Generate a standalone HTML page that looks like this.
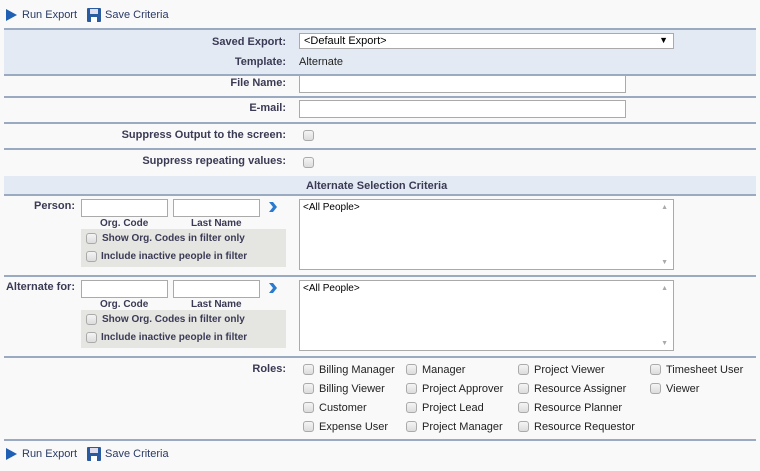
<!DOCTYPE html>
<html><head><style>
body{margin:0;width:760px;height:471px;background:#f9f9f9;font-family:"Liberation Sans",sans-serif;font-size:11px;color:#222;position:relative;overflow:hidden}
.a{position:absolute}
.ln{position:absolute;left:4px;width:752px;height:2px;background:#9aaac0}
.lb{position:absolute;font-weight:bold;color:#3a3a55;text-align:right;white-space:nowrap;margin-top:1px}
.in{position:absolute;background:#fff;border:1px solid #aaa;box-sizing:border-box}
.cb{position:absolute;width:11px;height:11px;border:1px solid #aaa;border-radius:3px;background:linear-gradient(#f4f4f4,#dcdcdc);box-sizing:border-box}
.t{position:absolute;white-space:nowrap;margin-top:1px}
.sm{font-weight:bold;color:#3a3a55;font-size:10px}
</style></head><body>
<svg class="a" style="left:5px;top:8px" width="13" height="14"><path d="M1 1L12 7L1 13Z" fill="#1f5fb4"/></svg>
<div class="t" style="left:22px;top:8px;color:#2a3a66">Run Export</div>
<svg class="a" style="left:87px;top:8px" width="14" height="14"><rect x="0" y="0" width="14" height="14" rx="1" fill="#2a5aa0"/><rect x="3" y="1" width="8" height="5" fill="#dde"/><rect x="4" y="9" width="6" height="5" fill="#fff"/></svg>
<div class="t" style="left:105px;top:8px;color:#2a3a66">Save Criteria</div>

<div class="ln" style="top:28px"></div>
<div class="a" style="left:4px;top:30px;width:752px;height:44px;background:#e4eaf3"></div>
<div class="lb" style="right:474px;top:35px">Saved Export:</div>
<div class="in" style="left:299px;top:33px;width:375px;height:16px;font-size:11px;padding:1px 4px;color:#000">&lt;Default Export&gt;<span style="position:absolute;right:5px;top:1px;font-size:9px">▼</span></div>
<div class="lb" style="right:474px;top:55px">Template:</div>
<div class="t" style="left:299px;top:55px">Alternate</div>
<div class="ln" style="top:74px"></div>
<div class="lb" style="right:474px;top:76px">File Name:</div>
<div class="in" style="left:299px;top:75px;width:327px;height:18px"></div>
<div class="ln" style="top:96px"></div>
<div class="lb" style="right:474px;top:101px">E-mail:</div>
<div class="in" style="left:299px;top:100px;width:327px;height:18px"></div>
<div class="ln" style="top:122px"></div>
<div class="lb" style="right:474px;top:128px">Suppress Output to the screen:</div>
<div class="cb" style="left:303px;top:130px"></div>
<div class="ln" style="top:148px"></div>
<div class="lb" style="right:474px;top:154px">Suppress repeating values:</div>
<div class="cb" style="left:303px;top:157px"></div>
<div class="a" style="left:4px;top:176px;width:752px;height:18px;background:#e4eaf3"></div>
<div class="lb" style="left:306px;top:179px">Alternate Selection Criteria</div>
<div class="ln" style="top:194px"></div>

<div class="lb" style="right:685px;top:199px">Person:</div>
<div class="in" style="left:81px;top:199px;width:87px;height:18px"></div>
<div class="in" style="left:173px;top:199px;width:87px;height:18px"></div>
<div class="t sm" style="left:100px;top:217px">Org. Code</div>
<div class="t sm" style="left:191px;top:217px">Last Name</div>
<svg class="a" style="left:268px;top:202px" width="9" height="10"><path d="M1 0L5 0L9 5L5 10L1 10L5 5Z" fill="#2a7ad0"/></svg>
<div class="a" style="left:81px;top:229px;width:205px;height:38px;background:#e5e5e2"></div>
<div class="cb" style="left:86px;top:233px"></div><div class="t sm" style="left:102px;top:232px">Show Org. Codes in filter only</div>
<div class="cb" style="left:86px;top:251px"></div><div class="t sm" style="left:101px;top:250px">Include inactive people in filter</div>
<div class="in" style="left:299px;top:199px;width:375px;height:71px;padding:2px 3px;font-size:10px;color:#000">&lt;All People&gt;<span style="position:absolute;right:5px;top:4px;font-size:7px;color:#aaa">▲</span><span style="position:absolute;right:5px;bottom:3px;font-size:7px;color:#aaa">▼</span></div>
<div class="ln" style="top:275px"></div>

<div class="lb" style="right:685px;top:280px">Alternate for:</div>
<div class="in" style="left:81px;top:280px;width:87px;height:18px"></div>
<div class="in" style="left:173px;top:280px;width:87px;height:18px"></div>
<div class="t sm" style="left:100px;top:298px">Org. Code</div>
<div class="t sm" style="left:191px;top:298px">Last Name</div>
<svg class="a" style="left:268px;top:283px" width="9" height="10"><path d="M1 0L5 0L9 5L5 10L1 10L5 5Z" fill="#2a7ad0"/></svg>
<div class="a" style="left:81px;top:310px;width:205px;height:38px;background:#e5e5e2"></div>
<div class="cb" style="left:86px;top:314px"></div><div class="t sm" style="left:102px;top:313px">Show Org. Codes in filter only</div>
<div class="cb" style="left:86px;top:332px"></div><div class="t sm" style="left:101px;top:331px">Include inactive people in filter</div>
<div class="in" style="left:299px;top:280px;width:375px;height:71px;padding:2px 3px;font-size:10px;color:#000">&lt;All People&gt;<span style="position:absolute;right:5px;top:4px;font-size:7px;color:#aaa">▲</span><span style="position:absolute;right:5px;bottom:3px;font-size:7px;color:#aaa">▼</span></div>
<div class="ln" style="top:356px"></div>

<div class="lb" style="right:474px;top:362px">Roles:</div>
<div class="cb" style="left:303px;top:364px"></div><div class="t" style="left:319px;top:363px">Billing Manager</div>
<div class="cb" style="left:303px;top:383px"></div><div class="t" style="left:319px;top:382px">Billing Viewer</div>
<div class="cb" style="left:303px;top:402px"></div><div class="t" style="left:319px;top:401px">Customer</div>
<div class="cb" style="left:303px;top:421px"></div><div class="t" style="left:319px;top:420px">Expense User</div>
<div class="cb" style="left:406px;top:364px"></div><div class="t" style="left:422px;top:363px">Manager</div>
<div class="cb" style="left:406px;top:383px"></div><div class="t" style="left:422px;top:382px">Project Approver</div>
<div class="cb" style="left:406px;top:402px"></div><div class="t" style="left:422px;top:401px">Project Lead</div>
<div class="cb" style="left:406px;top:421px"></div><div class="t" style="left:422px;top:420px">Project Manager</div>
<div class="cb" style="left:518px;top:364px"></div><div class="t" style="left:534px;top:363px">Project Viewer</div>
<div class="cb" style="left:518px;top:383px"></div><div class="t" style="left:534px;top:382px">Resource Assigner</div>
<div class="cb" style="left:518px;top:402px"></div><div class="t" style="left:534px;top:401px">Resource Planner</div>
<div class="cb" style="left:518px;top:421px"></div><div class="t" style="left:534px;top:420px">Resource Requestor</div>
<div class="cb" style="left:650px;top:364px"></div><div class="t" style="left:666px;top:363px">Timesheet User</div>
<div class="cb" style="left:650px;top:383px"></div><div class="t" style="left:666px;top:382px">Viewer</div>
<div class="ln" style="top:439px"></div>

<svg class="a" style="left:5px;top:447px" width="13" height="14"><path d="M1 1L12 7L1 13Z" fill="#1f5fb4"/></svg>
<div class="t" style="left:22px;top:447px;color:#2a3a66">Run Export</div>
<svg class="a" style="left:87px;top:447px" width="14" height="14"><rect x="0" y="0" width="14" height="14" rx="1" fill="#2a5aa0"/><rect x="3" y="1" width="8" height="5" fill="#dde"/><rect x="4" y="9" width="6" height="5" fill="#fff"/></svg>
<div class="t" style="left:105px;top:447px;color:#2a3a66">Save Criteria</div>
</body></html>
